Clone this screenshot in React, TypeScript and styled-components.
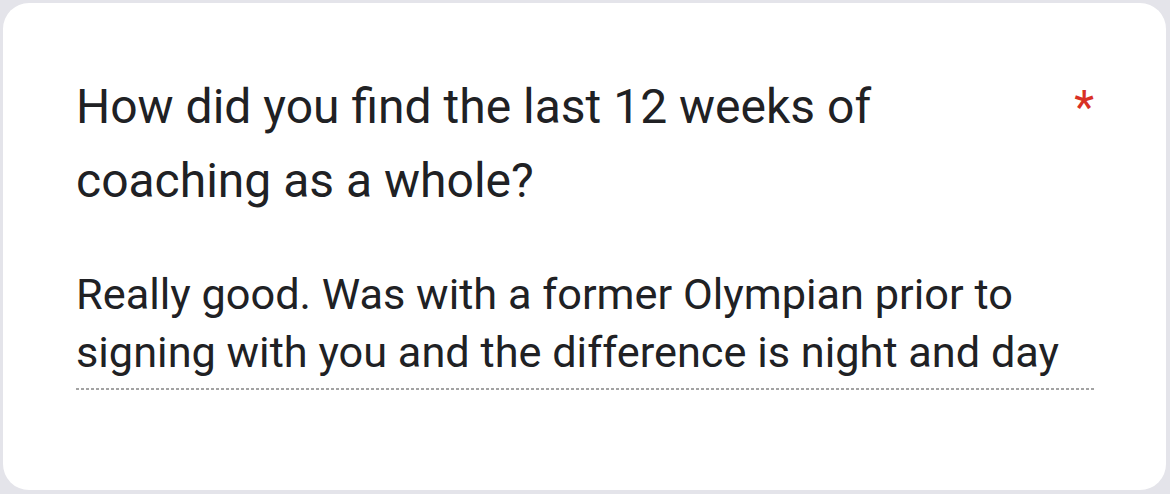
import React from "react";
import styled, { createGlobalStyle } from "styled-components";

const Global = createGlobalStyle`
  html, body { margin: 0; padding: 0; background: #e4e4ea; }
  body { width: 1170px; height: 494px; overflow: hidden; }
`;

const Page = styled.div`
  box-sizing: border-box;
  width: 1170px;
  height: 494px;
  padding: 3px 4px 4px 3px;
  display: flex;
`;

const Card = styled.div`
  flex: 1;
  background: #ffffff;
  border-radius: 26px;
  padding: 67px 72px 0 73px;
  display: flex;
  flex-direction: column;
`;

const Header = styled.div`
  display: flex;
  align-items: flex-start;
  justify-content: space-between;
`;

const Title = styled.div`
  font-family: Roboto, "Noto Sans", sans-serif;
  font-size: 48px;
  line-height: 74px;
  color: #202124;
  max-width: 870px;
`;

const Required = styled.span`
  font-family: Roboto, sans-serif;
  font-size: 46px;
  line-height: 74px;
  color: #d93025;
`;

const Answer = styled.div`
  margin-top: 48px;
  font-family: Roboto, "Noto Sans", sans-serif;
  font-size: 43.3px;
  line-height: 58px;
  color: #202124;
  padding-bottom: 6px;
`;

const Underline = styled.div`
  height: 2px;
  background-image: repeating-linear-gradient(
    to right,
    #a3a3a3 0px,
    #a3a3a3 3px,
    transparent 3px,
    transparent 5px
  );
`;

export default function App() {
  return (
    <>
      <Global />
      <Page>
        <Card>
          <Header>
            <Title>How did you find the last 12 weeks of coaching as a whole?</Title>
            <Required>*</Required>
          </Header>
          <Answer>
            Really good. Was with a former Olympian prior to signing with you and the difference is night and day
          </Answer>
          <Underline />
        </Card>
      </Page>
    </>
  );
}
